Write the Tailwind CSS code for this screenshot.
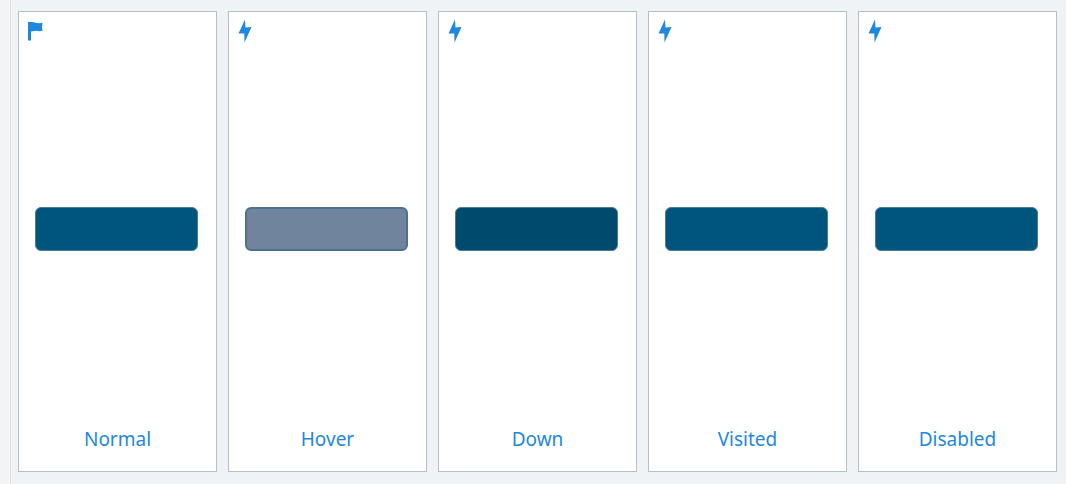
<!DOCTYPE html>
<html lang="en">
<head>
<meta charset="utf-8">
<title>Button states</title>
<script src="https://cdn.jsdelivr.net/npm/@tailwindcss/browser@4"></script>
</head>
<body class="flex min-h-screen bg-[#eff3f6] font-['Noto_Sans',sans-serif] text-[19px] text-[#1e88dc]">
<svg class="hidden" aria-hidden="true">
  <symbol id="flag" viewBox="0 0 16 24"><path fill="currentColor" d="M1 3H4Q6 2.800 8.500 3.700T15.500 3.700L15 8L15.500 11.800Q12 12.500 9.500 11.800L4 12.500V21.500H1Z"/></symbol>
  <symbol id="bolt" viewBox="0 0 16 24"><path fill="currentColor" d="M8 0.500L8.500 8.500L14.500 8L7.500 23.500L7.300 14.500L1.500 14.500Z"/></symbol>
</svg>
<aside class="w-[11px] shrink-0 border-r border-[#e1e4e8] bg-[#f3f4f5]"></aside>
<main class="grid flex-1 grid-cols-5 gap-[11px] pt-[11px] pr-[9px] pb-3 pl-[7px]">
  <section class="flex flex-col justify-between border border-[#b5bfc6] bg-white px-4 pt-[7px] pb-[18px]">
    <svg class="-ml-2 h-6 w-4" aria-hidden="true"><use href="#flag"/></svg>
    <button aria-labelledby="normal" class="mb-[10px] h-11 w-[163px] self-start rounded-md border border-[#4d7c93] bg-[#00557f]"></button>
    <h2 id="normal" class="text-center leading-7">Normal</h2>
  </section>
  <section class="flex flex-col justify-between border border-[#b5bfc6] bg-white px-4 pt-[7px] pb-[18px]">
    <svg class="-ml-2 h-6 w-4" aria-hidden="true"><use href="#bolt"/></svg>
    <button aria-labelledby="hover" class="mb-[10px] h-11 w-[163px] self-start rounded-md border-2 border-[#4b738d] bg-[#70849d]"></button>
    <h2 id="hover" class="text-center leading-7">Hover</h2>
  </section>
  <section class="flex flex-col justify-between border border-[#b5bfc6] bg-white px-4 pt-[7px] pb-[18px]">
    <svg class="-ml-2 h-6 w-4" aria-hidden="true"><use href="#bolt"/></svg>
    <button aria-labelledby="down" class="mb-[10px] h-11 w-[163px] self-start rounded-md border border-[#4d7c93] bg-[#004a6e]"></button>
    <h2 id="down" class="text-center leading-7">Down</h2>
  </section>
  <section class="flex flex-col justify-between border border-[#b5bfc6] bg-white px-4 pt-[7px] pb-[18px]">
    <svg class="-ml-2 h-6 w-4" aria-hidden="true"><use href="#bolt"/></svg>
    <button aria-labelledby="visited" class="mb-[10px] h-11 w-[163px] self-start rounded-md border border-[#4d7c93] bg-[#00557f]"></button>
    <h2 id="visited" class="text-center leading-7">Visited</h2>
  </section>
  <section class="flex flex-col justify-between border border-[#b5bfc6] bg-white px-4 pt-[7px] pb-[18px]">
    <svg class="-ml-2 h-6 w-4" aria-hidden="true"><use href="#bolt"/></svg>
    <button disabled aria-labelledby="disabled" class="mb-[10px] h-11 w-[163px] self-start rounded-md border border-[#4d7c93] bg-[#00557f]"></button>
    <h2 id="disabled" class="text-center leading-7">Disabled</h2>
  </section>
</main>
</body>
</html>
